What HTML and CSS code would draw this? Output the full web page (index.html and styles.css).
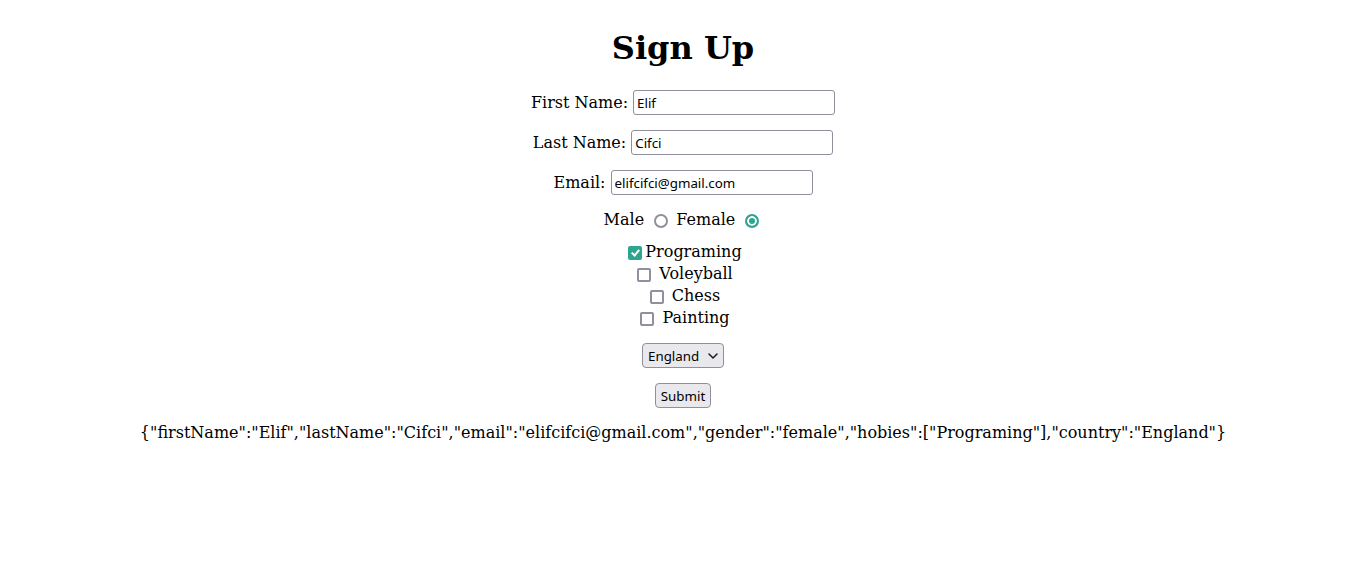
FILE: index.html
```html
<!DOCTYPE html>
<html lang="en">
<head>
<meta charset="utf-8">
<title>Sign Up</title>
<link rel="stylesheet" href="styles.css">
</head>
<body>
<div class="page">
  <h1 class="title">Sign Up</h1>
  <form class="form">
    <div class="field"><label class="label">First Name:</label><input class="text-input" type="text" value="Elif"></div>
    <div class="field"><label class="label">Last Name:</label><input class="text-input" type="text" value="Cifci"></div>
    <div class="field"><label class="label">Email:</label><input class="text-input" type="email" value="elifcifci@gmail.com"></div>
    <div class="radios">Male <input class="radio" type="radio" name="gender" value="male"> Female <input class="radio" type="radio" name="gender" value="female" checked></div>
    <div class="checks">
      <div class="check-row"><input class="check" type="checkbox" checked>Programing</div>
      <div class="check-row"><input class="check" type="checkbox"> Voleyball</div>
      <div class="check-row"><input class="check" type="checkbox"> Chess</div>
      <div class="check-row"><input class="check" type="checkbox"> Painting</div>
    </div>
    <div class="select-row">
      <span class="select-wrap">
        <select class="select"><option>England</option><option>Turkey</option><option>Germany</option></select>
        <svg class="chevron" width="10" height="6" viewBox="0 0 10 6"><path d="M1 1 L5 5 L9 1" fill="none" stroke="#1a1a1a" stroke-width="1.5" stroke-linecap="round" stroke-linejoin="round"/></svg>
      </span>
    </div>
    <div class="submit-row"><button class="button" type="button">Submit</button></div>
  </form>
  <p class="output">{"firstName":"Elif","lastName":"Cifci","email":"elifcifci@gmail.com","gender":"female","hobies":["Programing"],"country":"England"}</p>
</div>
</body>
</html>
```

FILE: styles.css
```css
html, body {
  margin: 0;
  padding: 0;
  background: #fff;
}

body {
  font-family: "DejaVu Serif", serif;
  font-size: 16px;
  color: #000;
}

.page {
  display: flex;
  flex-direction: column;
  align-items: center;
  padding-top: 30px;
}

.title {
  margin: 0;
  font-size: 32px;
  font-weight: bold;
  line-height: 37px;
  height: 37px;
}

.form {
  display: flex;
  flex-direction: column;
  align-items: center;
  margin-top: 23px;
}

.field {
  display: flex;
  align-items: center;
  gap: 5px;
  height: 25px;
  margin-bottom: 15px;
}

.label {
  line-height: 19px;
}

.text-input {
  box-sizing: border-box;
  width: 202px;
  height: 25px;
  margin: 0;
  padding: 0 3px;
  border: 1px solid #8f8f9d;
  border-radius: 3px;
  background: #fff;
  font-family: "Noto Sans", sans-serif;
  font-size: 13.33px;
  color: #000;
  outline: none;
}

.radios {
  height: 22px;
  line-height: 22px;
  margin-top: -1px;
  text-align: center;
}

.radio {
  appearance: none;
  -webkit-appearance: none;
  box-sizing: border-box;
  width: 14px;
  height: 14px;
  margin: 0 3px 0 5px;
  border: 2px solid #8f8f9d;
  border-radius: 50%;
  background: #fff;
  vertical-align: -3px;
}

.radio:checked {
  border-color: #2ea58f;
  background: #2ea58f;
  box-shadow: inset 0 0 0 2px #fff;
}

.checks {
  margin-top: 10px;
  display: flex;
  flex-direction: column;
  align-items: center;
}

.check-row {
  height: 22px;
  line-height: 22px;
  text-align: center;
}

.check {
  appearance: none;
  -webkit-appearance: none;
  box-sizing: border-box;
  width: 14px;
  height: 14px;
  margin: 0 3px 0 4px;
  border: 2px solid #8f8f9d;
  border-radius: 2px;
  background: #fff;
  vertical-align: -3px;
  position: relative;
}

.check:checked {
  border-color: #2ea58f;
  background: #2ea58f;
}

.check:checked::after {
  content: "";
  position: absolute;
  left: 3px;
  top: 0;
  width: 3px;
  height: 6px;
  border: solid #fff;
  border-width: 0 2px 2px 0;
  transform: rotate(40deg);
}

.select-row {
  margin-top: 14px;
  height: 25px;
}

.select-wrap {
  position: relative;
  display: inline-block;
}

.select {
  appearance: none;
  -webkit-appearance: none;
  box-sizing: border-box;
  width: 82px;
  height: 25px;
  margin: 0;
  padding: 0 0 0 5px;
  border: 1px solid #8f8f9d;
  border-radius: 4px;
  background: #e9e9ed;
  font-family: "Noto Sans", sans-serif;
  font-size: 13.33px;
  color: #000;
}

.chevron {
  position: absolute;
  right: 6px;
  top: 10px;
  pointer-events: none;
}

.submit-row {
  margin-top: 15px;
  height: 25px;
}

.button {
  box-sizing: border-box;
  width: 56px;
  height: 25px;
  margin: 0;
  padding: 0;
  border: 1px solid #8f8f9d;
  border-radius: 4px;
  background: #e9e9ed;
  font-family: "Noto Sans", sans-serif;
  font-size: 13.33px;
  color: #000;
}

.output {
  margin: 15px 0 0;
  line-height: 19px;
}
```
